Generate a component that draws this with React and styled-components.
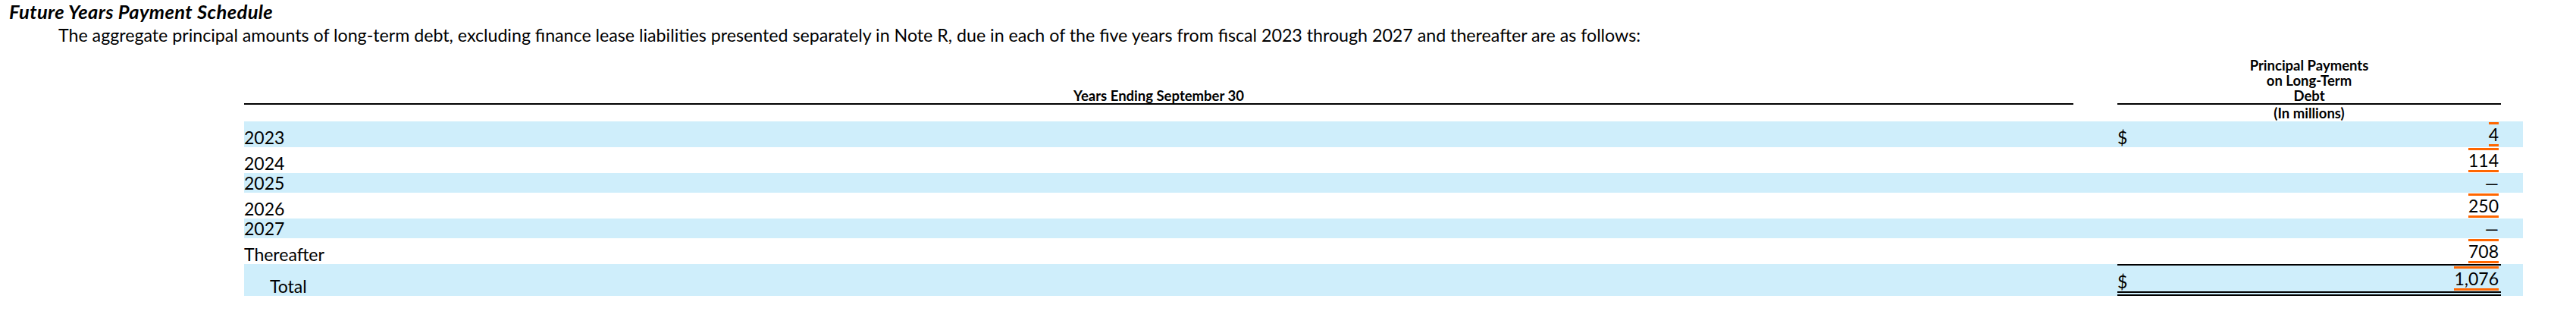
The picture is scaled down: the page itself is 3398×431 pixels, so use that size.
import React from 'react';
import styled, { createGlobalStyle, css } from 'styled-components';

const GlobalStyle = createGlobalStyle`
  body {
    margin: 0;
    background: #fff;
    font-family: Lato, "Open Sans", sans-serif;
    color: #000;
  }
`;

const Page = styled.div`
  width: 3398px;
  padding-top: 3px;
`;

const Title = styled.h2`
  margin: 0 0 0 12px;
  font-size: 25.5px;
  letter-spacing: 0.4px;
  line-height: 24px;
  font-weight: 700;
  font-style: italic;
`;

const Intro = styled.p`
  margin: 7px 0 0 77px;
  font-size: 23.2px;
  line-height: 24px;
`;

const Schedule = styled.table`
  margin: 18px 0 0 322px;
  width: 3006px;
  table-layout: fixed;
  border-collapse: separate;
  border-spacing: 0;
  font-size: 23px;
  line-height: 26px;
`;

const HeadCell = styled.th`
  padding: 0;
  font-size: 18.5px;
  line-height: 20px;
  font-weight: 700;
  text-align: center;
  vertical-align: bottom;
  ${({ $rule }) => $rule && css`border-bottom: 2px solid #000;`}
`;

const UnitCell = styled(HeadCell)`
  line-height: 22px;
  vertical-align: top;
`;

const Row = styled.tr`
  background: ${({ $shaded }) => ($shaded ? '#cfeefb' : 'transparent')};
`;

const LabelCell = styled.td`
  padding: 0 0 0 ${({ $indent }) => ($indent ? '34px' : '0')};
  vertical-align: bottom;
  white-space: nowrap;
`;

const Spacer = styled.td`
  padding: 0;
`;

const ValueCell = styled.td`
  padding: 0 3px 0 0;
  vertical-align: bottom;
  ${({ $total }) => $total && css`
    border-top: 2px solid #000;
    border-bottom: 6px double #000;
    background-clip: padding-box;
  `}
`;

const ValueLine = styled.div`
  display: flex;
  justify-content: space-between;
  align-items: flex-end;
`;

const Amount = styled.span`
  display: inline-block;
  ${({ $flag }) => $flag && css`
    margin: 1px 0;
    border-top: 3px solid #ff6600;
    border-bottom: 3px solid #ff6600;
  `}
`;

const rows = [
  { label: '2023', amount: '4', dollar: true, flag: true, shaded: true },
  { label: '2024', amount: '114', flag: true },
  { label: '2025', amount: '\u2014', shaded: true },
  { label: '2026', amount: '250', flag: true },
  { label: '2027', amount: '\u2014', shaded: true },
  { label: 'Thereafter', amount: '708', flag: true },
];

const App = () => (
  <Page>
    <GlobalStyle />
    <Title>Future Years Payment Schedule</Title>
    <Intro>
      The aggregate principal amounts of long-term debt, excluding finance lease liabilities presented separately in Note R, due in each of the five years from fiscal 2023 through 2027 and thereafter are as follows:
    </Intro>
    <Schedule>
      <colgroup>
        <col style={{ width: 2413 }} />
        <col style={{ width: 58 }} />
        <col style={{ width: 506 }} />
        <col style={{ width: 29 }} />
      </colgroup>
      <thead>
        <tr>
          <HeadCell $rule>Years Ending September 30</HeadCell>
          <HeadCell />
          <HeadCell $rule>
            Principal Payments
            <br />
            on Long-Term
            <br />
            Debt
          </HeadCell>
          <HeadCell />
        </tr>
        <tr>
          <UnitCell />
          <UnitCell />
          <UnitCell>(In millions)</UnitCell>
          <UnitCell />
        </tr>
      </thead>
      <tbody>
        {rows.map((r) => (
          <Row key={r.label} $shaded={r.shaded}>
            <LabelCell>{r.label}</LabelCell>
            <Spacer />
            <ValueCell>
              <ValueLine>
                <span>{r.dollar ? '$' : ''}</span>
                <Amount $flag={r.flag}>{r.amount}</Amount>
              </ValueLine>
            </ValueCell>
            <Spacer />
          </Row>
        ))}
        <Row $shaded>
          <LabelCell $indent>Total</LabelCell>
          <Spacer />
          <ValueCell $total>
            <ValueLine>
              <span>$</span>
              <Amount $flag>1,076</Amount>
            </ValueLine>
          </ValueCell>
          <Spacer />
        </Row>
      </tbody>
    </Schedule>
  </Page>
);

export default App;
